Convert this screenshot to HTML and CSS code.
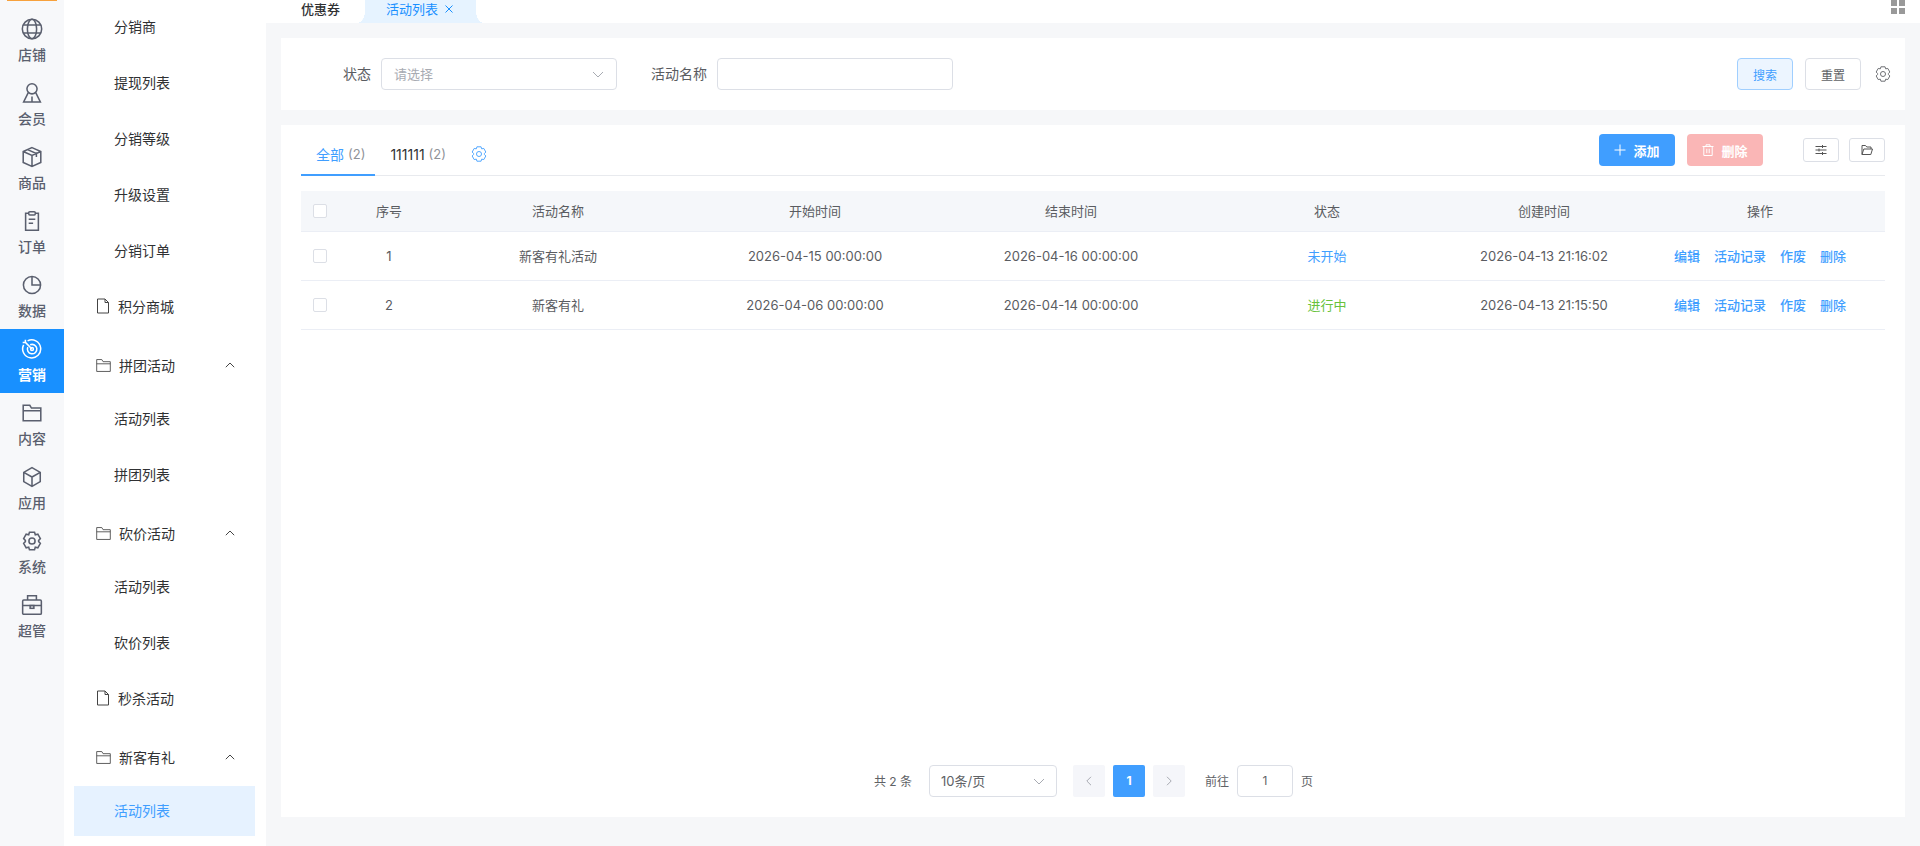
FILE: index.html
```html
<!DOCTYPE html>
<html lang="zh-CN">
<head>
    <meta charset="UTF-8">
    <title>活动列表</title>
    <link rel="stylesheet" href="styles.css">
</head>
<body>

    <svg class="icon-defs" width="0" height="0">
        <symbol id="i-globe" viewBox="0 0 20 20"><circle cx="10" cy="10" r="8.800"/><ellipse cx="10" cy="10" rx="4.200" ry="8.800"/><path d="M2 6.300h16M2 13.700h16"/></symbol>
        <symbol id="i-user" viewBox="0 0 20 20"><circle cx="10" cy="6.200" r="4.600"/><path d="M6.600 9.600 2.400 18.200h15.200L13.400 9.600M10 13.200v5"/></symbol>
        <symbol id="i-box" viewBox="0 0 20 20"><path d="M10 1.500 18 5v10l-8 3.500L2 15V5zM2 5l8 3.600L18 5M10 8.600v9.900M6 3.300l8 3.600v3"/></symbol>
        <symbol id="i-clip" viewBox="0 0 20 20"><path d="M7 3H4.200v15.500h11.600V3H13"/><rect x="7" y="1.500" width="6" height="3" rx="1"/><path d="M7 8.500h6M7 12h4"/></symbol>
        <symbol id="i-pie" viewBox="0 0 20 20"><circle cx="10" cy="10" r="7.800"/><path d="M10 2.200V10h7.800"/></symbol>
        <symbol id="i-target" viewBox="0 0 20 20"><path d="M6 2.600a8.200 8.200 0 1 1-3.600 3.600"/><path d="M8.300 6.200a4.300 4.300 0 1 1-2.100 2.100"/><circle cx="10" cy="10" r="1.300"/><path d="M10 10 4 4M4 4V1.500M4 4H1.500"/></symbol>
        <symbol id="i-folder" viewBox="0 0 20 20"><path d="M2 17V3h6l1.500 2.500H18V17zM2 8h16"/></symbol>
        <symbol id="i-cube" viewBox="0 0 20 20"><path d="M10 1.500 17.500 5.800v8.400L10 18.500l-7.500-4.300V5.800zM2.500 5.800 10 10l7.500-4.200M10 10v8.500"/></symbol>
        <symbol id="i-gear" viewBox="0 0 20 20"><path d="M7.700 2h4.600l.7 2.300 2.300-.5 2.300 4-1.600 1.700.1.500-.1.500 1.600 1.700-2.300 4-2.300-.5-.7 2.300H7.700L7 15.700l-2.300.5-2.300-4L4 10.500 3.900 10l.1-.5-1.600-1.700 2.300-4 2.300.5z"/><circle cx="10" cy="10" r="2.800"/></symbol>
        <symbol id="i-case" viewBox="0 0 20 20"><rect x="1.500" y="5.500" width="17" height="13" rx="1"/><path d="M6 5.500V1.500h8v4M1.500 10.500h17"/><rect x="8.300" y="10.500" width="3.400" height="2.500"/></symbol>
        <symbol id="i-doc" viewBox="0 0 14 16"><path d="M1.500 1h7.500l3.500 3.500V15h-11zM9 1v3.500h3.500"/></symbol>
        <symbol id="i-up" viewBox="0 0 10 6"><path d="M.8 5.200 5 1l4.200 4.200"/></symbol>
        <symbol id="i-down" viewBox="0 0 12 7"><path d="M1 1l5 5 5-5"/></symbol>
        <symbol id="i-x" viewBox="0 0 8 8"><path d="M.5.500l7 7M7.500.500l-7 7"/></symbol>
        <symbol id="i-plus" viewBox="0 0 12 12"><path d="M6 .5v11M.5 6h11"/></symbol>
        <symbol id="i-trash" viewBox="0 0 12 12"><path d="M.5 2.500h11M4 2.500V.8h4v1.700M1.800 2.500v9h8.400v-9M4.800 4.800v4.400M7.200 4.800v4.400"/></symbol>
        <symbol id="i-sliders" viewBox="0 0 12 12"><path d="M.5 2.500h11M.5 6h11M.5 9.500h11M7.500 1v3M4 4.500v3M7.500 8v3"/></symbol>
        <symbol id="i-open" viewBox="0 0 12 12"><path d="M1 10.500V1.500h3.500l1.300 1.500H10v2M1 10.500h8.800L11.500 5H2.800z"/></symbol>
        <symbol id="i-left" viewBox="0 0 6 10"><path d="M5 .8.800 5 5 9.200"/></symbol>
        <symbol id="i-right" viewBox="0 0 6 10"><path d="M1 .8 5.200 5 1 9.200"/></symbol>
    </svg>

    <div class="app">
        <!-- 一级导航 -->
        <nav class="rail">
            <span class="rail-top"></span>
            <a class="rail-item"><svg class="ico-rail"><use href="#i-globe"/></svg>店铺</a>
            <a class="rail-item"><svg class="ico-rail"><use href="#i-user"/></svg>会员</a>
            <a class="rail-item"><svg class="ico-rail"><use href="#i-box"/></svg>商品</a>
            <a class="rail-item"><svg class="ico-rail"><use href="#i-clip"/></svg>订单</a>
            <a class="rail-item"><svg class="ico-rail"><use href="#i-pie"/></svg>数据</a>
            <a class="rail-item active"><svg class="ico-rail"><use href="#i-target"/></svg>营销</a>
            <a class="rail-item"><svg class="ico-rail"><use href="#i-folder"/></svg>内容</a>
            <a class="rail-item"><svg class="ico-rail"><use href="#i-cube"/></svg>应用</a>
            <a class="rail-item"><svg class="ico-rail"><use href="#i-gear"/></svg>系统</a>
            <a class="rail-item"><svg class="ico-rail"><use href="#i-case"/></svg>超管</a>
        </nav>

        <!-- 二级菜单 -->
        <aside class="side">
            <a class="side-item">分销商</a>
            <a class="side-item">提现列表</a>
            <a class="side-item">分销等级</a>
            <a class="side-item">升级设置</a>
            <a class="side-item">分销订单</a>
            <a class="side-item side-leaf"><svg class="ico-doc"><use href="#i-doc"/></svg>积分商城</a>
            <div class="side-head"><svg class="ico-folder"><use href="#i-folder"/></svg>拼团活动<svg class="ico-up"><use href="#i-up"/></svg></div>
            <a class="side-item">活动列表</a>
            <a class="side-item">拼团列表</a>
            <div class="side-head"><svg class="ico-folder"><use href="#i-folder"/></svg>砍价活动<svg class="ico-up"><use href="#i-up"/></svg></div>
            <a class="side-item">活动列表</a>
            <a class="side-item">砍价列表</a>
            <a class="side-item side-leaf"><svg class="ico-doc"><use href="#i-doc"/></svg>秒杀活动</a>
            <div class="side-head"><svg class="ico-folder"><use href="#i-folder"/></svg>新客有礼<svg class="ico-up"><use href="#i-up"/></svg></div>
            <a class="side-item active">活动列表</a>
        </aside>

        <div class="main">
            <div class="tabbar">
                <span class="tabbar-item">优惠券</span>
                <span class="tabbar-item active">活动列表<svg class="ico-x"><use href="#i-x"/></svg></span>
                <span class="tabbar-grid"><i></i><i></i><i></i><i></i></span>
            </div>

            <div class="content">
                <!-- 筛选 -->
                <form class="card filter">
                    <label class="filter-label label-status">状态</label>
                    <div class="select select-status">
                        <span class="placeholder">请选择</span>
                        <svg class="ico-down"><use href="#i-down"/></svg>
                    </div>
                    <label class="filter-label label-name">活动名称</label>
                    <input class="text-input" type="text">
                    <button class="btn btn-search" type="button">搜索</button>
                    <button class="btn btn-reset" type="button">重置</button>
                    <svg class="ico-gear"><use href="#i-gear"/></svg>
                </form>

                <!-- 列表 -->
                <section class="card list">
                    <div class="list-top">
                        <div class="tab active">全部 <span class="count">(2)</span></div>
                        <div class="tab">111111 <span class="count">(2)</span></div>
                        <svg class="ico-tabgear"><use href="#i-gear"/></svg>
                        <div class="list-actions">
                            <button class="btn-main btn-add" type="button"><svg class="ico-btn"><use href="#i-plus"/></svg>添加</button>
                            <button class="btn-main btn-del" type="button"><svg class="ico-btn"><use href="#i-trash"/></svg>删除</button>
                            <button class="btn-tool tool-first" type="button"><svg class="ico-tool"><use href="#i-sliders"/></svg></button>
                            <button class="btn-tool" type="button"><svg class="ico-tool"><use href="#i-open"/></svg></button>
                        </div>
                    </div>

                    <table class="table">
                        <colgroup>
                            <col class="c-check"><col class="c-no"><col class="c-name"><col class="c-start">
                            <col class="c-end"><col class="c-status"><col class="c-created"><col class="c-ops">
                        </colgroup>
                        <thead>
                            <tr>
                                <th><span class="checkbox"></span></th>
                                <th>序号</th>
                                <th>活动名称</th>
                                <th>开始时间</th>
                                <th>结束时间</th>
                                <th>状态</th>
                                <th>创建时间</th>
                                <th>操作</th>
                            </tr>
                        </thead>
                        <tbody>
                            <tr>
                                <td><span class="checkbox"></span></td>
                                <td>1</td>
                                <td>新客有礼活动</td>
                                <td>2026-04-15 00:00:00</td>
                                <td>2026-04-16 00:00:00</td>
                                <td class="st-wait">未开始</td>
                                <td>2026-04-13 21:16:02</td>
                                <td class="ops"><a>编辑</a><a>活动记录</a><a>作废</a><a>删除</a></td>
                            </tr>
                            <tr>
                                <td><span class="checkbox"></span></td>
                                <td>2</td>
                                <td>新客有礼</td>
                                <td>2026-04-06 00:00:00</td>
                                <td>2026-04-14 00:00:00</td>
                                <td class="st-run">进行中</td>
                                <td>2026-04-13 21:15:50</td>
                                <td class="ops"><a>编辑</a><a>活动记录</a><a>作废</a><a>删除</a></td>
                            </tr>
                        </tbody>
                    </table>

                    <div class="pager">
                        <span class="pager-total">共 2 条</span>
                        <div class="select select-size">
                            <span>10条/页</span>
                            <svg class="ico-down"><use href="#i-down"/></svg>
                        </div>
                        <span class="pager-btn"><svg class="ico-arrow"><use href="#i-left"/></svg></span>
                        <span class="pager-btn current">1</span>
                        <span class="pager-btn"><svg class="ico-arrow"><use href="#i-right"/></svg></span>
                        <span class="pager-goto">前往</span>
                        <span class="pager-input">1</span>
                        <span class="pager-unit">页</span>
                    </div>
                </section>
            </div>
        </div>
    </div>

</body>
</html>
```

FILE: styles.css
```css
* {
    box-sizing: border-box;
}

html, body {
    margin: 0;
    height: 100%;
    overflow: hidden;
}

body {
    font-family: Inter, "Noto Sans CJK SC", sans-serif;
    font-size: 13px;
    color: #606266;
    background-color: #fff;
}

svg {
    fill: none;
    stroke: currentColor;
    flex-shrink: 0;
}

button {
    font-family: inherit;
    padding: 0;
}

.icon-defs {
    position: absolute;
}

.app {
    display: flex;
    height: 846px;
}

/* 一级导航 */
.rail {
    position: relative;
    width: 64px;
    padding-top: 9px;
    background-color: #f7f8fa;
    flex-shrink: 0;
}

.rail-top {
    position: absolute;
    top: 0;
    left: 7px;
    width: 50px;
    height: 1px;
    background-color: #f7a13c;
}

.rail-item {
    display: flex;
    flex-direction: column;
    align-items: center;
    height: 64px;
    padding-top: 9px;
    font-size: 14px;
    font-weight: 500;
    line-height: 20px;
    color: #5a5f6e;
}

.rail-item.active {
    background-color: #1890ff;
    color: #fff;
    font-weight: 700;
}

.ico-rail {
    width: 22px;
    height: 22px;
    margin-bottom: 5px;
    stroke-width: 1.4;
}

/* 二级菜单 */
.side {
    width: 202px;
    padding-top: 2px;
    flex-shrink: 0;
    overflow: hidden;
    font-size: 14px;
    color: #303133;
}

.side-item {
    display: flex;
    align-items: center;
    height: 50px;
    margin: 0 11px 6px 10px;
    padding-left: 40px;
    padding-bottom: 2px;
}

.side-item.active {
    background-color: #e6f2ff;
    color: #409eff;
    margin-bottom: 0;
}

.side-leaf {
    padding-left: 22px;
}

.side-head {
    display: flex;
    align-items: center;
    height: 56px;
    margin-left: 31px;
    padding-right: 31px;
    padding-bottom: 2px;
}

.ico-doc {
    width: 14px;
    height: 16px;
    margin-right: 8px;
    color: #444;
}

.ico-folder {
    width: 17px;
    height: 17px;
    margin-right: 7px;
    color: #444;
}

.ico-up {
    width: 10px;
    height: 6px;
    margin-left: auto;
    color: #444;
}

/* 主体 */
.main {
    flex: 1;
    min-width: 0;
    display: flex;
    flex-direction: column;
}

.tabbar {
    position: relative;
    display: flex;
    height: 23px;
    flex-shrink: 0;
    padding-left: 35px;
    color: #303133;
}

.tabbar-item {
    line-height: 18px;
    font-weight: 500;
}

.tabbar-item.active {
    position: relative;
    display: flex;
    align-items: flex-start;
    width: 111px;
    height: 23px;
    margin-left: 25px;
    padding-left: 21px;
    background-color: #e6f3ff;
    color: #1890ff;
    font-weight: 400;
}

.tabbar-item.active::before,
.tabbar-item.active::after {
    content: "";
    position: absolute;
    bottom: 0;
    width: 8px;
    height: 12px;
}

.tabbar-item.active::before {
    left: -8px;
    background: radial-gradient(ellipse 8px 12px at 0 0, #fff 98%, #e6f3ff 100%);
}

.tabbar-item.active::after {
    right: -8px;
    background: radial-gradient(ellipse 8px 12px at 100% 0, #fff 98%, #e6f3ff 100%);
}

.ico-x {
    width: 8px;
    height: 8px;
    margin: 5px 0 0 7px;
    stroke-width: 1;
}

.tabbar-grid {
    position: absolute;
    top: 0;
    right: 15px;
    display: grid;
    grid-template-columns: 6px 6px;
    grid-auto-rows: 6px;
    gap: 2px;
}

.tabbar-grid i {
    background-color: #999;
}

.content {
    flex: 1;
    min-height: 0;
    display: flex;
    flex-direction: column;
    gap: 15px;
    padding: 15px 15px 29px;
    background-color: #f6f7f9;
}

.card {
    background-color: #fff;
}

/* 筛选 */
.filter {
    display: flex;
    align-items: center;
    height: 72px;
    flex-shrink: 0;
    font-size: 14px;
}

.filter-label {
    padding-bottom: 2px;
    color: #5a5c61;
}

.label-status {
    margin-left: 62px;
    margin-right: 10px;
}

.label-name {
    margin-left: 34px;
    margin-right: 10px;
}

.select {
    display: flex;
    align-items: center;
    justify-content: space-between;
    height: 32px;
    border: 1px solid #dcdfe6;
    border-radius: 4px;
    background-color: #fff;
    font-size: 13px;
}

.select span {
    padding-bottom: 2px;
}

.select-status {
    width: 236px;
    padding: 0 12px;
}

.placeholder {
    color: #a8abb2;
}

.ico-down {
    width: 12px;
    height: 7px;
    color: #a8abb2;
}

.text-input {
    width: 236px;
    height: 32px;
    border: 1px solid #dcdfe6;
    border-radius: 4px;
    outline: none;
}

.btn {
    width: 56px;
    height: 32px;
    border-radius: 4px;
    font-size: 12px;
}

.btn-search {
    margin-left: auto;
    border: 1px solid #a0cfff;
    background-color: #ecf5ff;
    color: #409eff;
}

.btn-reset {
    margin-left: 12px;
    border: 1px solid #dcdfe6;
    background-color: #fff;
    color: #606266;
}

.ico-gear {
    width: 18px;
    height: 18px;
    margin: 0 13px 0 13px;
    color: #606266;
}

/* 列表 */
.list {
    flex: 1;
    min-height: 0;
    display: flex;
    flex-direction: column;
    padding: 0 20px;
}

.list-top {
    display: flex;
    align-items: center;
    height: 51px;
    border-bottom: 1px solid #e8eaee;
    font-size: 14px;
    color: #303133;
}

.tab {
    position: relative;
    display: flex;
    align-items: center;
    gap: 4px;
    height: 50px;
    padding: 8px 10px 0 15px;
    font-size: 14px;
}

.tab.active {
    color: #409eff;
}

.tab.active::after {
    content: "";
    position: absolute;
    left: 0;
    right: 0;
    bottom: -1px;
    height: 2px;
    background-color: #409eff;
}

.count {
    font-size: 13px;
    color: #909399;
}

.ico-tabgear {
    width: 18px;
    height: 18px;
    margin: 8px 0 0 14px;
    color: #409eff;
}

.list-actions {
    display: flex;
    align-items: center;
    margin-left: auto;
}

.btn-main {
    display: flex;
    align-items: center;
    justify-content: center;
    gap: 7px;
    width: 76px;
    height: 32px;
    margin-right: 12px;
    border: none;
    border-radius: 4px;
    color: #fff;
    font-size: 13px;
    font-weight: 700;
}

.btn-add {
    background-color: #409eff;
}

.btn-del {
    background-color: #fab6b6;
}

.ico-btn {
    width: 12px;
    height: 12px;
}

.btn-tool {
    display: flex;
    align-items: center;
    justify-content: center;
    width: 36px;
    height: 24px;
    margin-left: 10px;
    border: 1px solid #dcdfe6;
    border-radius: 3px;
    background-color: #fff;
    color: #555;
}

.tool-first {
    margin-left: 28px;
}

.ico-tool {
    width: 12px;
    height: 12px;
}

.table {
    width: 100%;
    margin-top: 15px;
    border-collapse: collapse;
    table-layout: fixed;
    font-size: 13px;
    color: #5a5c61;
}

.c-check { width: 50px; }
.c-no { width: 76px; }
.c-name { width: 262px; }
.c-start { width: 252px; }
.c-end { width: 260px; }
.c-status { width: 252px; }
.c-created { width: 182px; }
.c-ops { width: 250px; }

.table th {
    height: 40px;
    padding: 0;
    background-color: #f5f7fa;
    border-bottom: 1px solid #ebeef5;
    font-weight: 400;
    text-align: center;
}

.table td {
    height: 49px;
    padding: 0;
    border-bottom: 1px solid #ebeef5;
    text-align: center;
}

.table th:first-child,
.table td:first-child {
    padding-left: 12px;
    text-align: left;
}

.checkbox {
    display: block;
    width: 14px;
    height: 14px;
    border: 1px solid #dcdfe6;
    border-radius: 2px;
    background-color: #fff;
}

.st-wait {
    color: #409eff;
}

.st-run {
    color: #67c23a;
}

.ops a {
    margin-right: 14px;
    color: #409eff;
    font-weight: 500;
}

.ops a:last-child {
    margin-right: 0;
}

/* 分页 */
.pager {
    display: flex;
    align-items: center;
    justify-content: center;
    margin-top: auto;
    padding: 0 0 20px 1px;
    font-size: 12px;
    color: #606266;
}

.pager-total {
    margin-right: 17px;
    padding-bottom: 2px;
}

.select-size {
    width: 128px;
    padding: 0 11px;
    margin-right: 16px;
}

.pager-btn {
    display: flex;
    align-items: center;
    justify-content: center;
    width: 32px;
    height: 32px;
    margin-right: 8px;
    padding-bottom: 1px;
    border-radius: 2px;
    background-color: #f5f6fa;
    color: #a8abb2;
}

.pager-btn.current {
    background-color: #409eff;
    color: #fff;
    font-weight: 700;
}

.ico-arrow {
    width: 6px;
    height: 10px;
}

.pager-goto {
    margin-left: 12px;
    margin-right: 8px;
    padding-bottom: 2px;
}

.pager-input {
    display: flex;
    align-items: center;
    justify-content: center;
    width: 56px;
    height: 32px;
    margin-right: 8px;
    padding-bottom: 1px;
    border: 1px solid #dcdfe6;
    border-radius: 4px;
}

.pager-unit {
    padding-bottom: 2px;
}
```
